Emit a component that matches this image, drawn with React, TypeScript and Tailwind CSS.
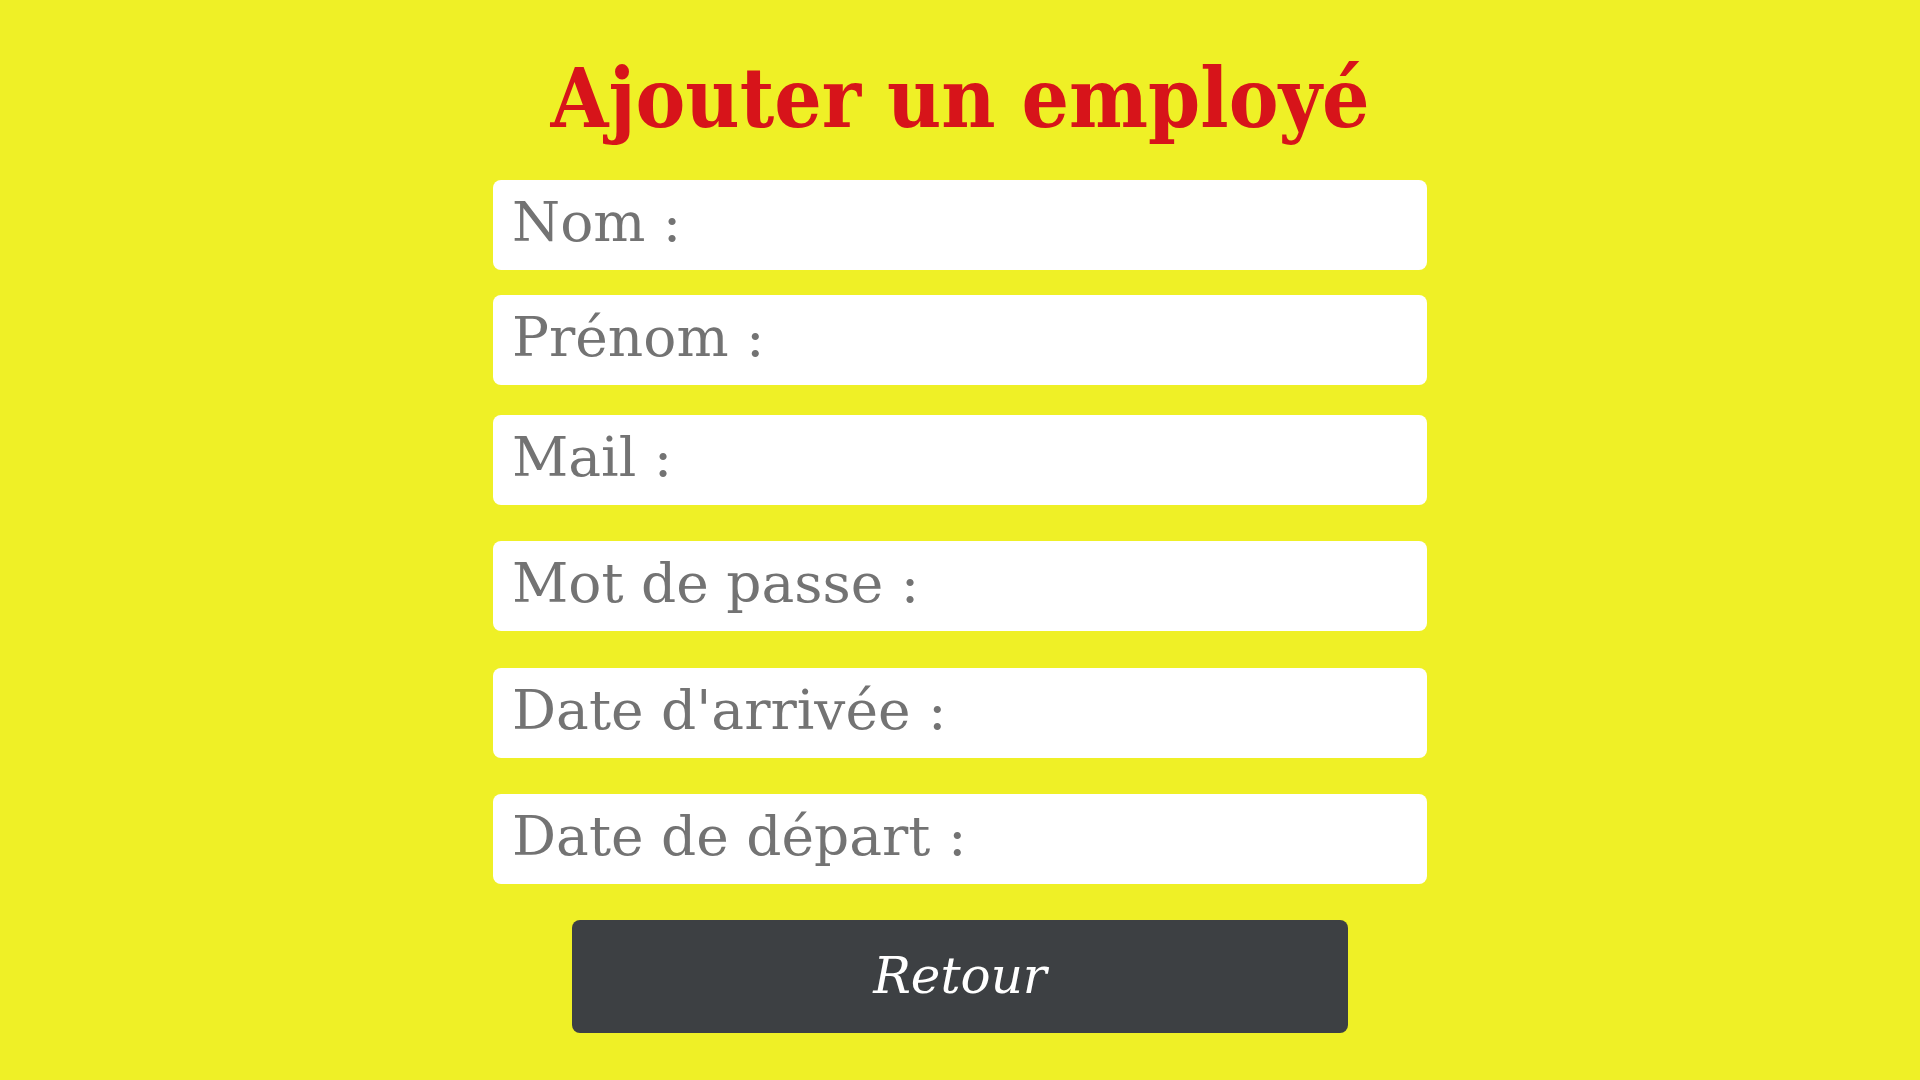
const fields = [
  { label: "Nom :", type: "text", gap: "mt-0" },
  { label: "Prénom :", type: "text", gap: "mt-[25px]" },
  { label: "Mail :", type: "email", gap: "mt-[30px]" },
  { label: "Mot de passe :", type: "password", gap: "mt-[36px]" },
  { label: "Date d'arrivée :", type: "text", gap: "mt-[37px]" },
  { label: "Date de départ :", type: "text", gap: "mt-[36px]" },
];

export default function App() {
  return (
    <div className="min-h-screen bg-[#eff026] flex flex-col items-center font-['DejaVu_Serif',serif]">
      <h1 className="mt-[57px] text-[83px] leading-none font-bold text-[#d7141a] font-['DejaVu_Serif_Condensed','DejaVu_Serif',serif]">
        Ajouter un employé
      </h1>
      <form className="mt-[40px] w-[934px] flex flex-col items-center">
        {fields.map((f) => (
          <input
            key={f.label}
            type={f.type}
            placeholder={f.label}
            className={`${f.gap} w-full h-[90px] rounded-lg bg-white pl-[19px] pb-[6px] text-[55px] text-[#737373] placeholder:text-[#737373] outline-none`}
          />
        ))}
        <button
          type="button"
          className="mt-[36px] w-[776px] h-[113px] rounded-lg bg-[#3d4043] text-white italic text-[50px]"
        >
          Retour
        </button>
      </form>
    </div>
  );
}
